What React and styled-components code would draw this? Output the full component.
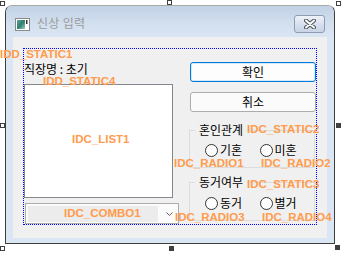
import React from 'react';
import styled, { createGlobalStyle } from 'styled-components';

const Global = createGlobalStyle`
  html, body { margin: 0; padding: 0; background: #ffffff; }
  body {
    width: 342px; height: 253px; overflow: hidden;
    font-family: "Noto Sans CJK KR", "Noto Sans", sans-serif;
    font-size: 12px; color: #000;
  }
`;

const Stage = styled.div`
  position: relative;
  width: 342px;
  height: 253px;
  box-sizing: border-box;
  padding: 5px 0 0 5px;
`;

const Window = styled.div`
  width: 330px;
  height: 239px;
  box-sizing: border-box;
  border: 1px solid #3e3e3e;
  border-top-color: #a9a9a9;
  border-radius: 7px 7px 0 0;
  background: #dae6f3;
  display: flex;
  flex-direction: column;
  overflow: hidden;
`;

const TitleBar = styled.div`
  height: 31px;
  flex: none;
  display: flex;
  align-items: flex-start;
  padding: 0 9px 0 9px;
  background: linear-gradient(#c1d2e6, #d3e0ef 60%, #dae6f3);
  border-radius: 6px 6px 0 0;
`;

const TitleIcon = styled.svg`
  margin-top: 12px;
  flex: none;
`;

const TitleText = styled.span`
  margin: 9px 0 0 7px;
  color: #9b9b9b;
  font-size: 12px;
  line-height: 16px;
  letter-spacing: 0.3px;
`;

const CloseButton = styled.div`
  margin: 9px 0 0 auto;
  width: 31px;
  height: 18px;
  box-sizing: border-box;
  border: 1px solid #8d9cb2;
  border-radius: 3px;
  background: linear-gradient(#eef3f9, #d5dfec 55%, #c9d5e5);
  display: flex;
  align-items: center;
  justify-content: center;
`;

const Client = styled.div`
  margin: 0 7px;
  height: 201px;
  flex: none;
  background: #f0f0f0;
  box-sizing: border-box;
  padding: 11px 0 0 10px;
`;

const Guide = styled.div`
  width: 294px;
  height: 177px;
  box-sizing: border-box;
  border: 1px dotted #0000ff;
  display: flex;
`;

const LeftCol = styled.div`
  width: 155px;
  display: flex;
  flex-direction: column;
  padding-top: 12px;
`;

const StaticText = styled.div`
  line-height: 16px;
  height: 16px;
  white-space: pre;
`;

const ListBox = styled.div`
  margin-top: 7px;
  width: 149px;
  height: 114px;
  box-sizing: border-box;
  border: 1px solid #828790;
  background: #ffffff;
`;

const Combo = styled.div`
  margin: 5px 0 0 1px;
  width: 154px;
  height: 21px;
  box-sizing: border-box;
  border: 1px solid #adadad;
  background: #fbfbfb;
  display: flex;
  align-items: center;
  padding: 0 2px;
`;

const ComboField = styled.div`
  width: 130px;
  height: 16px;
  background: #ececec;
`;

const Chevron = styled.svg`
  margin-left: 8px;
`;

const RightCol = styled.div`
  margin-left: 10px;
  width: 127px;
  display: flex;
  flex-direction: column;
  padding-top: 13px;
`;

const Button = styled.div`
  margin-left: 1px;
  margin-top: ${p => p.$gap}px;
  width: 126px;
  height: 20px;
  box-sizing: border-box;
  border: 1px solid ${p => (p.$default ? '#0078d7' : '#adadad')};
  border-radius: 3px;
  background: ${p => (p.$default ? '#fdfdfd' : '#fbfbfb')};
  display: flex;
  align-items: center;
  justify-content: center;
  font-size: 12px;
  line-height: 16px;
  ${p => p.$default && 'box-shadow: inset 0 0 0 1px #d6e8f8;'}
`;

const Group = styled.fieldset`
  margin: ${p => p.$gap}px 0 0 0;
  padding: 0;
  width: 126px;
  height: ${p => p.$h}px;
  box-sizing: border-box;
  border: 1px solid #dcdcdc;
  min-width: 0;
`;

const Legend = styled.legend`
  margin-left: 5px;
  padding: 0 4px;
  font-size: 12px;
  line-height: 14px;
`;

const RadioRow = styled.div`
  display: flex;
  margin: ${p => p.$top}px 0 0 15px;
`;

const RadioItem = styled.div`
  width: 57px;
  display: flex;
  align-items: center;
  gap: 2px;
  line-height: 16px;
`;

const RadioDot = styled.span`
  width: 13px;
  height: 13px;
  box-sizing: border-box;
  border: 1px solid #333333;
  border-radius: 50%;
  background: #ffffff;
  flex: none;
`;

const IdLabel = styled.span`
  position: absolute;
  left: ${p => p.$x}px;
  top: ${p => p.$y}px;
  font-family: "Liberation Sans", Arial, sans-serif;
  font-weight: 700;
  font-size: 11.5px;
  line-height: 12px;
  color: #ff9b4c;
  white-space: nowrap;
`;

const Handle = styled.span`
  position: absolute;
  left: ${p => p.$x}px;
  top: ${p => p.$y}px;
  width: 5px;
  height: 5px;
  box-sizing: border-box;
  border: 1px solid #404040;
  background: ${p => (p.$filled ? '#404040' : '#ffffff')};
`;

const labels = [
  ['IDD_STATIC1', 0, 48],
  ['IDD_STATIC4', 43, 75],
  ['IDC_LIST1', 72, 133],
  ['IDC_COMBO1', 64, 207],
  ['IDC_STATIC2', 247, 123],
  ['IDC_RADIO1', 174, 157],
  ['IDC_RADIO2', 261, 157],
  ['IDC_STATIC3', 247, 178],
  ['IDC_RADIO3', 175, 211],
  ['IDC_RADIO4', 262, 211],
];

const handles = [
  [0, 1, false],
  [167, 0, false],
  [336, 1, false],
  [0, 123, false],
  [336, 123, true],
  [0, 246, false],
  [169, 246, true],
  [335, 245, true],
];

export default function App() {
  return (
    <Stage>
      <Global />
      <Window>
        <TitleBar>
          <TitleIcon width="15" height="13" viewBox="0 0 15 13">
            <defs>
              <linearGradient id="ig" x1="0" y1="0" x2="1" y2="1">
                <stop offset="0" stopColor="#5fa7a0" />
                <stop offset="0.5" stopColor="#2f7f6c" />
                <stop offset="1" stopColor="#9ccfc8" />
              </linearGradient>
            </defs>
            <rect x="0.5" y="0.5" width="14" height="12" fill="#ffffff" stroke="#8a8a8a" />
            <rect x="2" y="2" width="8" height="9" fill="url(#ig)" />
            <rect x="11" y="2" width="1.5" height="4" fill="#333" />
          </TitleIcon>
          <TitleText>신상 입력</TitleText>
          <CloseButton>
            <svg width="12" height="10" viewBox="0 0 12 10">
              <path d="M2 1.5 L10 8.5 M10 1.5 L2 8.5" stroke="#4a4f57" strokeWidth="4" strokeLinecap="round" />
              <path d="M2 1.5 L10 8.5 M10 1.5 L2 8.5" stroke="#ffffff" strokeWidth="2" strokeLinecap="round" />
            </svg>
          </CloseButton>
        </TitleBar>
        <Client>
          <Guide>
            <LeftCol>
              <StaticText>직장명 : 초기</StaticText>
              <ListBox />
              <Combo>
                <ComboField />
                <Chevron width="7" height="4" viewBox="0 0 7 4">
                  <path d="M0.5 0.5 L3.5 3.5 L6.5 0.5" stroke="#606060" fill="none" strokeWidth="1" />
                </Chevron>
              </Combo>
            </LeftCol>
            <RightCol>
              <Button $default $gap={0}>확인</Button>
              <Button $gap={10}>취소</Button>
              <Group $gap={11} $h={45}>
                <Legend>혼인관계</Legend>
                <RadioRow $top={5}>
                  <RadioItem><RadioDot />기혼</RadioItem>
                  <RadioItem><RadioDot />미혼</RadioItem>
                </RadioRow>
              </Group>
              <Group $gap={7} $h={46}>
                <Legend>동거여부</Legend>
                <RadioRow $top={6}>
                  <RadioItem><RadioDot />동거</RadioItem>
                  <RadioItem><RadioDot />별거</RadioItem>
                </RadioRow>
              </Group>
            </RightCol>
          </Guide>
        </Client>
      </Window>
      {labels.map(([t, x, y]) => (
        <IdLabel key={t} $x={x} $y={y}>{t}</IdLabel>
      ))}
      {handles.map(([x, y, f], i) => (
        <Handle key={i} $x={x} $y={y} $filled={f} />
      ))}
    </Stage>
  );
}
